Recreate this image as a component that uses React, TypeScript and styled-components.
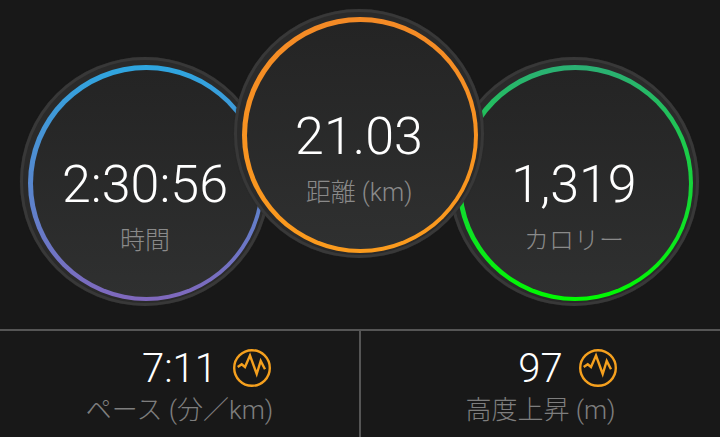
import React from "react";
import styled, { createGlobalStyle } from "styled-components";

const Global = createGlobalStyle`
  html, body { margin: 0; padding: 0; background: #181818; }
  body { width: 720px; height: 437px; overflow: hidden; font-family: Roboto, "Noto Sans CJK JP", sans-serif; }
`;

const Page = styled.div`
  width: 720px;
  height: 437px;
  display: flex;
  flex-direction: column;
  background: #181818;
`;

const GaugeRow = styled.div`
  height: 329px;
  display: flex;
  align-items: flex-start;
  padding: 9px 0 0 20px;
  box-sizing: border-box;
`;

const Rim = styled.div<{ $raised?: boolean; $shift?: number }>`
  flex: none;
  width: 250px;
  height: 249px;
  box-sizing: border-box;
  padding: 5px 3px 2px 5px;
  border: 3px solid #383838;
  border-radius: 50%;
  background: #2a2a2a;
  box-shadow: 0 0 1px #2a2a2a;
  position: relative;
  z-index: ${(p) => (p.$raised ? 2 : 1)};
  margin-top: ${(p) => (p.$raised ? 0 : 48)}px;
  margin-left: ${(p) => p.$shift ?? 0}px;
`;

const Ring = styled.div<{ $from: string; $to: string }>`
  width: 100%;
  height: 100%;
  box-sizing: border-box;
  padding: 4.5px;
  border-radius: 50%;
  background: linear-gradient(${(p) => p.$from}, ${(p) => p.$to});
`;

const Face = styled.div`
  width: 100%;
  height: 100%;
  border-radius: 50%;
  background: linear-gradient(#242424, #2f3030);
  display: flex;
  flex-direction: column;
  align-items: center;
  padding: 90px 2px 0 0;
  box-sizing: border-box;
`;

const GaugeValue = styled.div`
  font-size: 52px;
  line-height: 50px;
  font-weight: 300;
  color: #fff;
  white-space: nowrap;
`;

const GaugeLabel = styled.div`
  margin-top: 15px;
  font-size: 25px;
  line-height: 32px;
  font-weight: 300;
  color: #8a8a8a;
  white-space: nowrap;
`;

const StatBar = styled.div`
  flex: 1;
  display: grid;
  grid-template-columns: 361px 359px;
  border-top: 2px solid #555;
`;

const Stat = styled.div<{ $divided?: boolean }>`
  display: flex;
  flex-direction: column;
  align-items: center;
  box-sizing: border-box;
  padding-top: 18px;
  ${(p) => (p.$divided ? "border-right: 2px solid #555;" : "")}
`;

const StatTop = styled.div`
  display: flex;
  align-items: flex-start;
  gap: 16px;
  height: 40px;
  padding-left: 54px;
`;

const StatValue = styled.div`
  font-size: 40px;
  line-height: 40px;
  font-weight: 300;
  color: #fff;
`;

const StatLabel = styled.div`
  margin-top: 5px;
  font-size: 26px;
  line-height: 32px;
  font-weight: 300;
  color: #7e7e7e;
  white-space: nowrap;
`;

const Pulse = () => (
  <svg width="38" height="38" viewBox="0 0 38 38" fill="none" stroke="#f5a01e" strokeWidth="2.4" strokeLinejoin="miter">
    <circle cx="19" cy="19" r="17.8" />
    <path d="M4.7 18 L8.7 15.3 L12 18 L17 6.5 L23.7 25 L27.7 12 L32 20.3" />
  </svg>
);

export default function App() {
  return (
    <Page>
      <Global />
      <GaugeRow>
        <Rim>
          <Ring $from="#2ea6e0" $to="#8068bd">
            <Face>
              <GaugeValue>2:30:56</GaugeValue>
              <GaugeLabel>時間</GaugeLabel>
            </Face>
          </Ring>
        </Rim>
        <Rim $raised $shift={-36}>
          <Ring $from="#f48a26" $to="#fb9b1d">
            <Face>
              <GaugeValue>21.03</GaugeValue>
              <GaugeLabel>距離 (km)</GaugeLabel>
            </Face>
          </Ring>
        </Rim>
        <Rim $shift={-35}>
          <Ring $from="#2bb074" $to="#00fa00">
            <Face>
              <GaugeValue>1,319</GaugeValue>
              <GaugeLabel>カロリー</GaugeLabel>
            </Face>
          </Ring>
        </Rim>
      </GaugeRow>
      <StatBar>
        <Stat $divided>
          <StatTop>
            <StatValue>7:11</StatValue>
            <Pulse />
          </StatTop>
          <StatLabel>ペース (分／km)</StatLabel>
        </Stat>
        <Stat>
          <StatTop>
            <StatValue>97</StatValue>
            <Pulse />
          </StatTop>
          <StatLabel>高度上昇 (m)</StatLabel>
        </Stat>
      </StatBar>
    </Page>
  );
}
